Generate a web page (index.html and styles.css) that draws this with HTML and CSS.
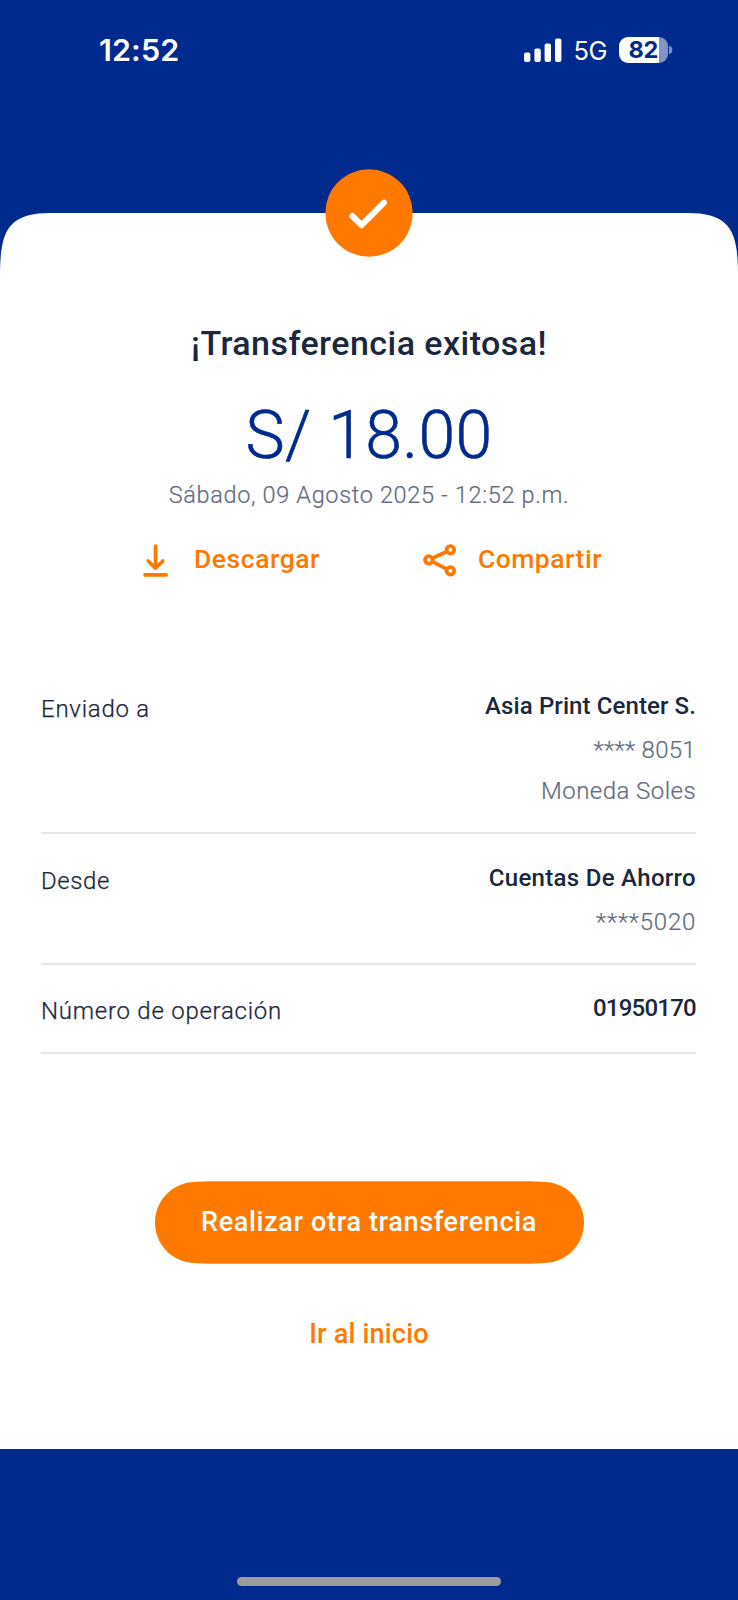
FILE: index.html
```html
<!DOCTYPE html>
<html lang="es">
<head>
<meta charset="utf-8">
<title>Transferencia exitosa</title>
<link rel="stylesheet" href="styles.css">
</head>
<body>
<div class="screen">
  <header class="status">
    <span class="clock">12:52</span>
    <div class="indicators">
      <svg class="signal" width="38" height="25" viewBox="0 0 38 25" fill="#fff">
        <rect x="0" y="14.5" width="6.4" height="9.5" rx="2"/>
        <rect x="10.4" y="10.4" width="6.4" height="13.6" rx="2"/>
        <rect x="20.6" y="5.4" width="6.4" height="18.6" rx="2"/>
        <rect x="31" y="0.4" width="6.4" height="23.6" rx="2"/>
      </svg>
      <span class="network">5G</span>
      <div class="battery"><span class="level">82</span></div>
      <svg class="nub" width="4" height="10" viewBox="0 0 4 10"><path d="M0 .7C2 1.2 3.4 2.8 3.4 5S2 8.800 0 9.300Z" fill="#8291c6"/></svg>
    </div>
  </header>

  <main class="card">
    <svg class="card-top" width="738" height="62" viewBox="0 0 738 62"><path d="M0 62C0 18 8 0 50 0H688C730 0 738 18 738 62Z" fill="#fff"/></svg>
    <svg class="badge" width="88" height="88" viewBox="0 0 88 88">
      <circle cx="44" cy="44" r="43.700" fill="#ff7900"/>
      <path d="M27.300 47L36.600 56.200L59 33.700" fill="none" stroke="#fff" stroke-width="6" stroke-linecap="round" stroke-linejoin="round"/>
    </svg>
    <div class="card-body">
      <h1 class="title">¡Transferencia exitosa!</h1>
      <p class="amount">S/ 18.00</p>
      <p class="date">Sábado, 09 Agosto 2025 - 12:52 p.m.</p>
      <div class="actions">
        <a class="action">
          <svg width="26" height="33" viewBox="0 0 26 33" fill="none" stroke="#ff7900" stroke-width="3.700" stroke-linecap="round" stroke-linejoin="round"><path d="M12.500 2V24M5.200 17L12.500 24.300L19.800 17M2 30.800H23.200"/></svg>
          <span class="download">Descargar</span>
        </a>
        <a class="action">
          <svg width="34" height="33" viewBox="0 0 34 33" fill="none" stroke="#ff7900" stroke-width="3.700"><circle cx="5.800" cy="16" r="3.800"/><circle cx="27.400" cy="5.800" r="3.800"/><circle cx="27.400" cy="26.800" r="3.800"/><path d="M9.300 14.300L23.900 7.500M9.300 17.700L23.900 25.100"/></svg>
          <span class="share">Compartir</span>
        </a>
      </div>

      <dl class="details">
        <div class="row">
          <dt class="sent">Enviado a</dt>
          <dd><strong class="payee">Asia Print Center S.</strong><span class="masked">**** 8051</span><span class="currency">Moneda Soles</span></dd>
        </div>
        <div class="row">
          <dt class="from">Desde</dt>
          <dd><strong class="account">Cuentas De Ahorro</strong><span class="masked tight">****5020</span></dd>
        </div>
        <div class="row">
          <dt class="opname">Número de operación</dt>
          <dd><strong class="opnumber">01950170</strong></dd>
        </div>
      </dl>

      <a class="primary">
        <svg class="pill" width="429" height="83" viewBox="0 0 429 83"><path d="M0 41.500C0 20 16 3.500 36 1.200C44 .4 52 .2 62 .2H367C377 .2 385 .4 393 1.200C413 3.500 429 20 429 41.500S413 79.500 393 81.800C385 82.600 377 82.800 367 82.800H62C52 82.800 44 82.600 36 81.800C16 79.500 0 63 0 41.500Z" fill="#ff7900"/></svg>
        <span class="primary-label">Realizar otra transferencia</span>
      </a>
      <a class="home">Ir al inicio</a>
    </div>
  </main>

  <footer class="foot"><div class="handle"></div></footer>
</div>
</body>
</html>
```

FILE: styles.css
```css
* { box-sizing: border-box; }
body { margin: 0; font-family: Roboto, "Noto Sans", sans-serif; color: #1b273d; }
h1, p, dl, dd { margin: 0; }

.screen { width: 738px; height: 1600px; display: flex; flex-direction: column; background: #002a8d; overflow: hidden; }

.status { height: 213px; padding: 30px 65px 0 99px; display: flex; justify-content: space-between; align-items: flex-start; font-family: Inter, sans-serif; color: #fff; }
.clock { font-size: 30.500px; line-height: 40px; font-weight: 600; letter-spacing: 0.1px; }
.indicators { display: flex; align-items: flex-start; }
.signal { margin: 7.500px 12px 0 0; }
.network { width: 45.500px; font-size: 25.500px; line-height: 40px; letter-spacing: -0.5px; padding-top: 1px; }
.battery { width: 48.500px; height: 26px; margin-top: 6.500px; border-radius: 9px; background: linear-gradient(to right, #fff 40px, #8291c6 40px); text-align: center; }
.level { font-size: 23.500px; line-height: 26px; font-weight: 700; color: #002a8d; display: block; letter-spacing: -0.3px; }
.nub { margin: 15px 0 0 1.500px; }

.card { position: relative; height: 1236px; display: flex; flex-direction: column; }
.card-top { display: block; flex: none; }
.badge { position: absolute; top: -44px; left: 324.500px; }
.card-body { flex: 1; background: #fff; padding-top: 48px; display: flex; flex-direction: column; align-items: center; white-space: nowrap; }

.title { font-size: 34px; line-height: 40px; font-weight: 500; letter-spacing: 0.46px; }
.amount { margin-top: 33px; font-size: 66px; line-height: 80px; font-weight: 300; -webkit-text-stroke: 0.6px #002a8d; color: #002a8d; letter-spacing: 0.4px; }
.date { margin-top: 3px; font-size: 23.500px; line-height: 32px; font-weight: 300; -webkit-text-stroke: 0.2px #626b80; color: #626b80; letter-spacing: 0.65px; }

.actions { align-self: stretch; height: 33px; margin-top: 33px; padding: 0 136px 0 143px; display: flex; justify-content: space-between; }
.action { display: flex; align-items: flex-start; gap: 25px; font-size: 26.500px; line-height: 30px; font-weight: 500; color: #ff7900; }
.action span { display: block; }
.action:last-child { gap: 21px; }
.download { letter-spacing: 0.55px; }
.share { letter-spacing: 0.5px; }

.details { align-self: stretch; margin: 98px 42px 0 41px; }
.row { display: flex; justify-content: space-between; border-bottom: 2px solid #e6e7ea; padding: 29px 0 26px; font-size: 24px; line-height: 30px; }
.row:first-child { padding-top: 16px; }
.row:last-child { padding-top: 28px; }
.row dt { padding-top: 3px; font-weight: 300; -webkit-text-stroke: 0.25px #1b273d; letter-spacing: 0.75px; }
.row .from { letter-spacing: 0.6px; }
.row dd { display: flex; flex-direction: column; align-items: flex-end; }
.row strong { font-weight: 500; letter-spacing: 0.1px; }
.row .account { letter-spacing: 0.3px; }
.row .opnumber { letter-spacing: -0.75px; }
.row dd span { margin-top: 14px; font-weight: 300; -webkit-text-stroke: 0.2px #626b80; color: #626b80; letter-spacing: 0.3px; }
.row dd span + span { margin-top: 11px; letter-spacing: 0.45px; }
.row .tight { letter-spacing: 0.75px; }

.primary { position: relative; width: 429px; height: 83px; margin-top: 127px; display: flex; justify-content: center; }
.pill { position: absolute; inset: 0; }
.primary-label { position: relative; padding-top: 26px; font-size: 27px; line-height: 30px; font-weight: 500; color: #fff; letter-spacing: 0.65px; }
.home { margin-top: 55px; font-size: 27px; line-height: 30px; font-weight: 500; color: #ff7900; letter-spacing: 0.2px; }

.foot { flex: 1; padding-top: 128px; }
.handle { width: 264px; height: 9px; margin: 0 auto; border-radius: 5px; background: #9c9c9e; }
```
